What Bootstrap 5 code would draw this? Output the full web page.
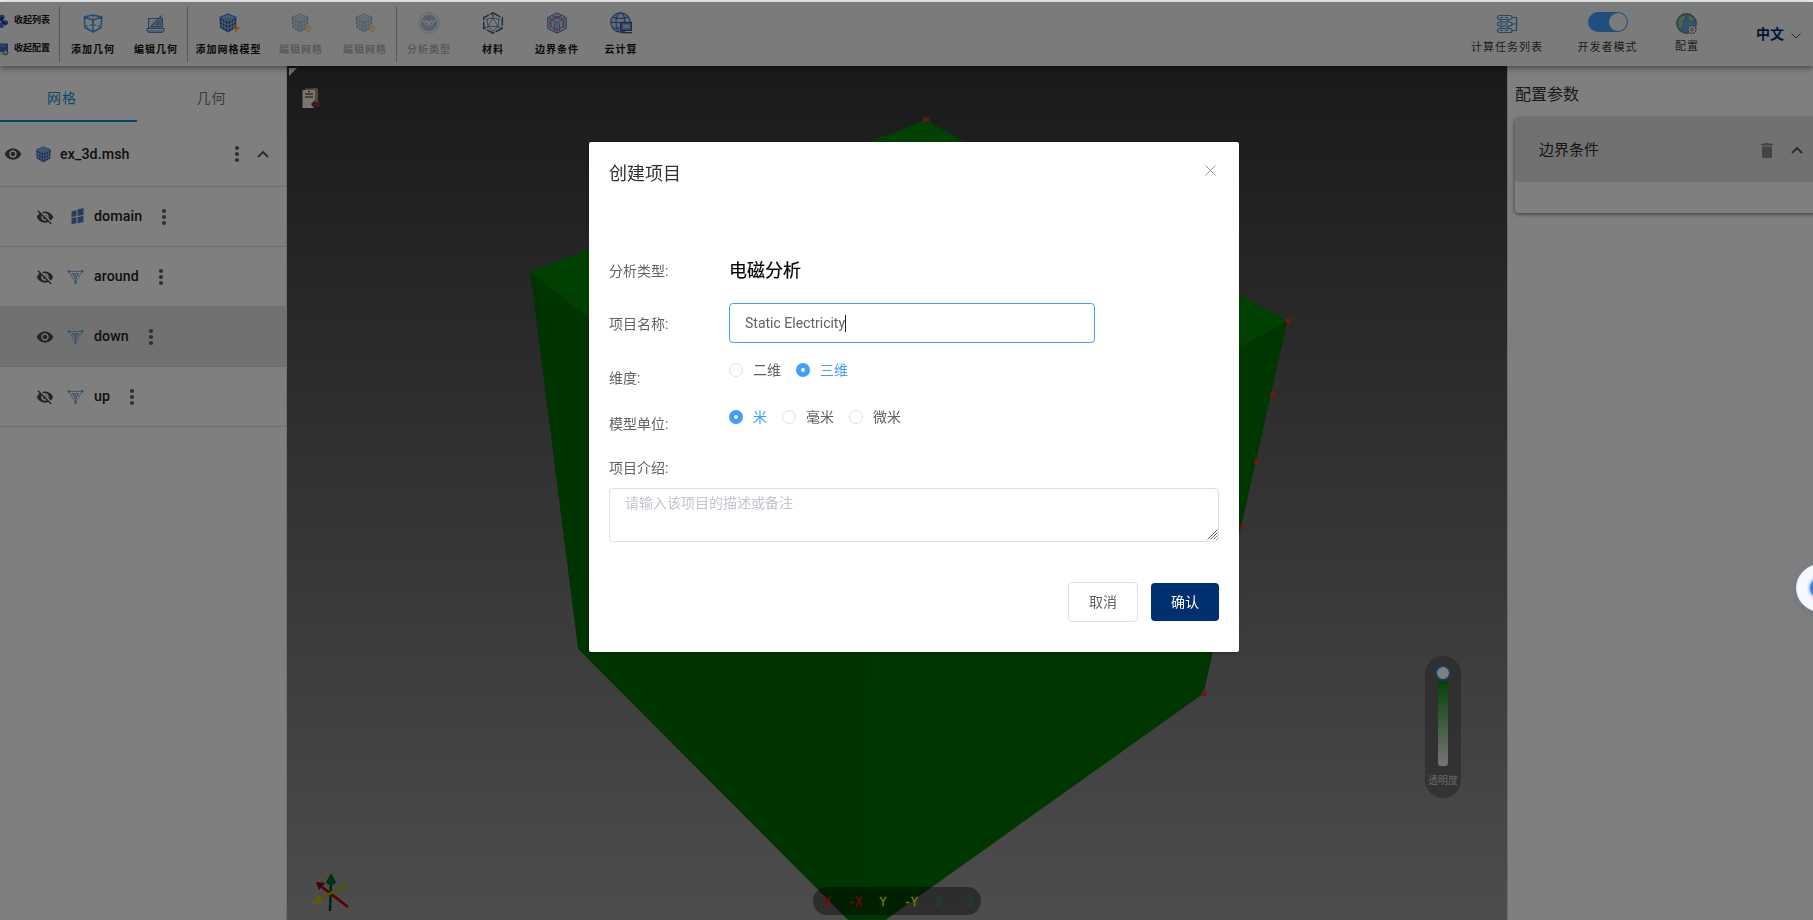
<!DOCTYPE html>
<html lang="zh-CN">
<head>
<meta charset="utf-8">
<meta name="viewport" content="width=device-width, initial-scale=1">
<title>创建项目</title>
<link rel="stylesheet" href="https://cdn.jsdelivr.net/npm/bootstrap@5.3.0/dist/css/bootstrap.min.css">
<style>
  body { font-family: Roboto, "Noto Sans CJK SC", sans-serif; font-size: 14px; line-height: 20px; color: #303133; background: #f1f3f3; overflow: hidden; height: 100vh; }
  svg { display: block; flex: none; }
  .app { height: 918px; margin-top: 2px; background: #fff; }
  .toolbar { height: 64px; background: #f6f6f6; box-shadow: 0 2px 6px rgba(0,0,0,.45); position: relative; z-index: 2; }
  .tool { width: 64px; font-size: 10px; font-weight: 700; letter-spacing: 1px; color: #111; line-height: 16px; white-space: nowrap; }
  .tool svg { margin-bottom: 8px; }
  .tool.wide { width: 81px; }
  .tool.off { color: #b5b5b5; }
  .tool.off svg { opacity: .4; }
  .group { border-left: 1px solid #b0b0b0; height: 56px; margin-top: 4px; }
  .group .tool { padding-top: 6px; }
  .fold { width: 59px; font-size: 9px; font-weight: 700; color: #111; line-height: 12px; padding-top: 12px; }
  .fold > div { height: 28px; align-items: flex-start; }
  .fold svg { margin-left: -6px; margin-right: 5px; }
  .opt { font-size: 11px; letter-spacing: 1px; color: #3a3a3a; line-height: 16px; white-space: nowrap; }
  .opts { margin-right: -1px; }
  .switcher { width: 40px; height: 20px; border-radius: 10px; background: #409eff; padding: 1px; }
  .switcher i { display: block; width: 18px; height: 18px; border-radius: 50%; background: #f6f6f6; margin-left: 20px; }
  .lang { font-weight: 700; color: #003070; }
  .side { width: 287px; border-right: 1px solid #e0e0e0; }
  .tabs { height: 56px; }
  .tabs > div { height: 56px; padding-top: 22px; letter-spacing: 1px; text-align: center; color: #777; }
  .tabs > .on { width: 137px; padding-right: 13px; color: #1593cf; border-bottom: 2px solid #0b8fce; }
  .tree > div { height: 60px; border-bottom: 1px solid #dcdcdc; font-weight: 500; color: #222; }
  .tree .root { height: 65px; padding-left: 4px; }
  .tree .leaf { padding-left: 36px; }
  .tree .leaf .lbl { margin-top: -2px; }
  .tree .leaf svg:last-child { margin-top: 1px; }
  .tree .sel { background: #e3e3e3; }
  .lbl { letter-spacing: .1px; font-size: 14.2px; }
  .view { position: relative; background: linear-gradient(#343434, #9a9a9a); overflow: hidden; }
  .scene { position: absolute; inset: 0; }
  .conf { width: 306px; border-left: 1px solid #d8d8d8; padding-left: 7px; }
  .conf h2 { font-size: 16px; font-weight: 400; line-height: 24px; margin: 17px 0 11px 0; color: #333; }
  .pane { height: 95px; border-radius: 4px; box-shadow: 0 1px 4px rgba(0,0,0,.6); margin-right: -10px; }
  .pane > div { height: 64px; background: #e3e3e3; border-radius: 4px; font-size: 15px; padding: 0 20px 0 24px; color: #2a2a2a; }
  .pane span { margin-top: -1px; }
  .opacity-bar { position: absolute; left: 1138px; top: 590px; width: 36px; height: 142px; border-radius: 18px; background: rgba(60,60,60,.45); padding-top: 9px; font-size: 10px; color: #ccc; line-height: 14px; }
  .knob { width: 16px; height: 16px; border-radius: 50%; border: 2px solid #3478c8; background: #fff; position: relative; z-index: 1; }
  .track { width: 10px; height: 87px; margin-top: -2px; margin-bottom: 8px; border-radius: 0 0 3px 3px; background: linear-gradient(#0a800a, #ececec); }
  .axes { position: absolute; left: 526px; top: 821px; width: 168px; height: 28px; border-radius: 14px; background: rgba(0,0,0,.4); font: 11.5px/30px "DejaVu Sans Mono", monospace; -webkit-text-stroke: .3px; }
  .axes span { width: 28px; text-align: center; }
  .scrim { position: fixed; inset: 2px 0 0 0; background: rgba(0,0,0,.5); z-index: 10; padding: 140px 0 0 589px; }
  .dlg { width: 650px; height: 510px; background: #fff; border-radius: 2px; box-shadow: 0 1px 3px rgba(0,0,0,.3); padding: 20px; color: #606266; }
  .dlg-title { font-size: 18px; line-height: 24px; color: #303133; }
  .frow > label { width: 120px; }
  .kind { font-size: 18px; color: #000; -webkit-text-stroke: .2px #000; }
  .name-box { width: 366px; height: 40px; border: 1px solid #409eff; border-radius: 4px; padding: 0 15px; }
  .name-box::after { content: ""; width: 1px; height: 17px; background: #222; }
  .pick { gap: 10px; margin-right: 15px; }
  .pick i { width: 14px; height: 14px; border-radius: 50%; border: 1px solid #dcdfe6; }
  .pick.on { color: #409eff; }
  .pick.on i { border: 5px solid #409eff; }
  .memo { display: block; width: 610px; height: 54px; border: 1px solid #dcdfe6; border-radius: 4px; padding: 4px 15px; line-height: 21px; resize: none; outline: 0; }
  .memo::placeholder { color: #c0c4cc; opacity: 1; }
  .grip { position: absolute; right: 1px; bottom: 2px; }
  .dlg .btn { font-size: 14px; line-height: 20px; border-radius: 4px; padding: 0 0 1px; }
  .btn-no { width: 70px; height: 40px; border: 1px solid #dcdfe6; color: #606266; }
  .btn-yes, .btn-yes:hover { width: 68px; height: 38px; background: #003070; color: #fff; }
  .assist { position: fixed; right: -31px; top: 564px; width: 48px; height: 48px; border-radius: 50%; background: #f7f9fe; z-index: 11; box-shadow: 0 4px 14px rgba(70,90,140,.25); border: 1px solid #dce5fa; }
  .assist i { width: 20px; height: 20px; border-radius: 50%; background: #3f7df2; box-shadow: 0 0 3px 1px #7fa8f6; }
</style>
</head>
<body>
<svg width="0" height="0" class="position-absolute">
  <defs>
    <symbol id="cube" viewBox="0 0 20 20">
      <path d="M10 .5l8.500 3.500-.6 10.800L10 19.500l-7.900-4.700L1.500 4z" fill="#2559ab"/>
      <path d="M10 .5l8.500 3.500L10 8 1.500 4z" fill="#3f86d6"/>
      <path d="M10 8v11.500M1.500 4L10 8l8.500-4M4.500 2.800L13 6.700v11M7.200 1.700l8.500 3.900v10.600M15.500 2.800L7 6.700v11M12.800 1.700L4.300 5.600v10.600M2 8l8 4 8-4M2 11.500l8 4.200 8-4.200" fill="none" stroke="#c9daf2" stroke-width=".75"/>
    </symbol>
    <symbol id="eye" viewBox="0 0 24 24"><path fill="#484848" d="M12 4.500C7 4.500 2.730 7.610 1 12c1.730 4.390 6 7.500 11 7.500s9.270-3.110 11-7.500c-1.730-4.390-6-7.500-11-7.500zM12 17c-2.760 0-5-2.240-5-5s2.240-5 5-5 5 2.240 5 5-2.240 5-5 5zm0-8c-1.660 0-3 1.340-3 3s1.340 3 3 3 3-1.340 3-3-1.340-3-3-3z"/></symbol>
    <symbol id="eyeoff" viewBox="0 0 24 24"><path fill="#484848" d="M12 7c2.760 0 5 2.240 5 5 0 .65-.13 1.260-.36 1.830l2.920 2.920c1.510-1.260 2.700-2.890 3.430-4.750-1.730-4.390-6-7.500-11-7.500-1.400 0-2.740.25-3.980.7l2.160 2.160C10.740 7.130 11.350 7 12 7zM2 4.270l2.280 2.280.46.46C3.080 8.300 1.780 10.020 1 12c1.730 4.390 6 7.500 11 7.500 1.550 0 3.030-.3 4.380-.84l.42.42L19.730 22 21 20.730 3.270 3 2 4.270zM7.530 9.800l1.550 1.550c-.05.21-.08.43-.08.65 0 1.660 1.340 3 3 3 .22 0 .44-.03.65-.08l1.550 1.550c-.67.33-1.410.53-2.200.53-2.760 0-5-2.240-5-5 0-.79.2-1.530.53-2.200zm4.310-.78l3.150 3.150.02-.16c0-1.660-1.340-3-3-3l-.17.01z"/></symbol>
    <symbol id="dots" viewBox="0 0 6 18"><g fill="#606060"><circle cx="3" cy="3" r="2.100"/><circle cx="3" cy="9" r="2.100"/><circle cx="3" cy="15" r="2.100"/></g></symbol>
    <symbol id="up" viewBox="0 0 12 8"><path d="M1 7l5-5 5 5" fill="none" stroke="#555" stroke-width="1.800"/></symbol>
    <symbol id="tri" viewBox="0 0 16 14"><path d="M1.500 1.500h13L8 12.500zM4.500 3.500L8 5.500l3.500-2M8 5.500v7M5 3.500h6L8 9z" fill="none" stroke="#7c96cc" stroke-width=".8"/><g fill="#4bb4dc"><circle cx="1.400" cy="1.400" r="1.300"/><circle cx="14.600" cy="1.400" r="1.300"/><circle cx="8" cy="12.700" r="1.200"/><circle cx="8" cy="5.500" r=".8"/></g></symbol>
  </defs>
</svg>

<div class="app d-flex flex-column">
  <header class="toolbar d-flex">
    <div class="fold">
      <div class="d-flex"><svg width="15" height="14" viewBox="0 0 15 14"><path d="M6 1h4l1 3-3 3-3-2zM10 6l4 1v3l-3 1-2-2zM5 8l4 1 1 4-3 1-3-2z" fill="#3a68c8"/><path d="M7 6l5 5M8 3l-1 4" stroke="#1a2f86" stroke-width="2"/></svg>收起列表</div>
      <div class="d-flex"><svg width="15" height="14" viewBox="0 0 15 14"><path d="M0 1.500h14V10H0z" fill="#3868bd"/><path d="M2 4h10M3 12h6" stroke="#8aacde"/><circle cx="11.500" cy="10.500" r="2.400" fill="#b4c6e5" stroke="#4a5b80"/></svg>收起配置</div>
    </div>
    <div class="group d-flex" style="padding-left:1px">
      <div class="tool d-flex flex-column align-items-center">
        <svg width="22" height="22" viewBox="0 0 22 22" fill="none" stroke="#4296e0" stroke-width="1.500"><path d="M2.200 5L11 3l8.800 2-.8 10.500-8 4.500-8-4.500zM2.200 5L11 8l8.800-3M11 8v12" stroke-linejoin="round"/><path d="M11 3v9M3 14.500l8-2 8 2" stroke-dasharray="3 1.300" stroke-width="1"/></svg>添加几何</div>
      <div class="tool d-flex flex-column align-items-center" style="margin-left:-1px">
        <svg width="22" height="22" viewBox="0 0 22 22" fill="none" stroke="#5485bd" stroke-width="1.100"><path d="M3.500 6.500h14v9.500h-14z" fill="#dfe8f3"/><path d="M6 14.500L16 4v10.500zM11 12.500l3-3.500v3.500z" fill="#b4d5f2"/><path d="M2 16.500h17v2.500H2zM4 19v1.500h13V19"/></svg>编辑几何</div>
    </div>
    <div class="group d-flex" style="margin-left:-1px">
      <div class="tool wide d-flex flex-column align-items-center"><svg width="22" height="22" viewBox="0 0 22 22"><use href="#cube" y="1" width="20" height="20"/><path d="M18 12.500v7M14.500 16h7" stroke="#eda900" stroke-width="1.700"/></svg>添加网格模型</div>
      <div class="tool off d-flex flex-column align-items-center"><svg width="22" height="22" viewBox="0 0 22 22"><use href="#cube" y="1" width="20" height="20"/><circle cx="18" cy="16.500" r="2.400" fill="none" stroke="#f0c000" stroke-width="2"/></svg>编辑网格</div>
      <div class="tool off d-flex flex-column align-items-center"><svg width="22" height="22" viewBox="0 0 22 22"><use href="#cube" y="1" width="20" height="20"/><circle cx="18" cy="16.500" r="2.400" fill="none" stroke="#f0c000" stroke-width="2"/></svg>编辑网格</div>
    </div>
    <div class="group d-flex" style="margin-left:-1px">
      <div class="tool off d-flex flex-column align-items-center"><svg width="22" height="22" viewBox="0 0 22 22"><circle cx="11" cy="11" r="10.300" fill="#d3dff2" stroke="#8fa4cc"/><circle cx="11" cy="11" r="8.300" fill="#4c72b8"/><path d="M3.500 8.500q3 0 4 3.500 1.500 3 3.500-.5 2 3.500 3.500.5 1-3.500 4-3.500" fill="none" stroke="#e9d488" stroke-width="1.500"/><path d="M8 8.500l3 3 3-3" stroke="#eef3fb" fill="none" stroke-width="1.800"/></svg>分析类型</div>
      <div class="tool d-flex flex-column align-items-center"><svg width="22" height="22" viewBox="0 0 22 22" fill="none" stroke="#2c5cae"><path d="M11 .8l9.300 5v10.400l-9.300 5-9.300-5V5.800z" stroke-width="1.500" stroke-dasharray="8.500 1.500"/><path d="M11 6L6 14.500h10zM2 16l4-1.500L11 19l5-4.500 4 1.500M11 1v5M5 7l6-1 6 1-1 7.500M5 7l1 7.500" stroke-width=".7"/><g fill="#f08a24" stroke="none"><circle cx="11" cy="3.500" r="1.200"/><circle cx="5" cy="7.500" r="1.100"/><circle cx="17" cy="7.500" r="1.100"/><circle cx="5.500" cy="15" r="1.100"/><circle cx="16.500" cy="15" r="1.100"/><circle cx="11" cy="19" r="1.100"/></g></svg>材料</div>
      <div class="tool d-flex flex-column align-items-center"><svg width="22" height="22" viewBox="0 0 22 22" fill="none" stroke="#4a74b5"><path d="M11 .8l9.300 4.700v11L11 21.200l-9.300-4.700v-11z" fill="#bcd3ee"/><path d="M11 11v10M2 5.500l9 5.500 9-5.500M4 8v8M8.500 11v8M13.500 11v8M18 8v8M6.500 3.500l9 4.500M15.500 3.500L6.500 8" stroke-width=".8"/><path d="M11 4l6 3.200v7.600L11 18l-6-3.200V7.200z" stroke="#d85a5a" stroke-width="1"/></svg>边界条件</div>
      <div class="tool d-flex flex-column align-items-center"><svg width="22" height="22" viewBox="0 0 22 22" fill="none" stroke="#4764a0" stroke-width="1.100"><circle cx="10.500" cy="10.500" r="9.800" fill="#bcd8f3"/><ellipse cx="10.500" cy="10.500" rx="4.500" ry="9.800"/><path d="M1 10.500h19M3 5c5 2 10 2 15 0M3 16h8"/><path d="M10.500 10.500h11.200v8H10.500z" fill="#5d87d0" stroke="#4c4680"/><path d="M13 12.500h6.500v4H13z" fill="#a9cbf3" stroke="none"/><path d="M12 20.700h10" stroke="#5c4178" stroke-width="1.300"/></svg>云计算</div>
    </div>
    <div class="opts ms-auto d-flex">
      <div class="opt d-flex flex-column align-items-center" style="width:106px;padding-top:11px">
        <svg width="22" height="22" viewBox="0 0 22 22" fill="none" stroke="#3c8fd0" stroke-width="1.200"><rect x="1.500" y="2.500" width="14.500" height="4" rx="2"/><rect x="1.500" y="9" width="14.500" height="4" rx="2"/><rect x="1.500" y="15.500" width="14.500" height="4" rx="2"/><path d="M4 4.500h3M9 4.500h3M4 11h3M9 11h3M4 17.500h3M9 17.500h3M5 6.500V9M12 6.500V9M5 13v2.500M12 13v2.500M16 4.500h4.500v13H16M16 11h4.500"/></svg><span style="padding-top:5px">计算任务列表</span></div>
      <div class="opt d-flex flex-column align-items-center" style="width:95px;padding-top:10px">
        <div class="switcher"><i></i></div><span style="padding-top:8px">开发者模式</span></div>
      <div class="opt d-flex flex-column align-items-center" style="width:64px;padding-top:11px">
        <svg width="22" height="22" viewBox="0 0 22 22"><circle cx="10.500" cy="10.500" r="9.800" fill="#5fabe0" stroke="#6b7688" stroke-width="1.200"/><path d="M2 7c2-4 5-5 7-5l1 4-3 2 1 3-2 2 1 5c-4-2-6-6-5-11zM12 1.500c4 1 6 3 7 6l-4 2-3-3z" fill="#8fc9a8" stroke="#567a72" stroke-width=".7"/><circle cx="16" cy="16.500" r="4" fill="#f4f4f8" stroke="#77718c" stroke-width="1.300" stroke-dasharray="2.300 .8"/><circle cx="16" cy="16.500" r="1.400" fill="none" stroke="#66607a"/></svg><span style="padding-top:4px">配置</span></div>
      <div class="lang d-flex align-items-center" style="width:95px;height:64px;padding-left:37px">中文<svg class="mt-1" width="10" height="6" viewBox="0 0 10 6" style="margin-left:7px"><path d="M.5.5L5 5 9.500.5" fill="none" stroke="#555"/></svg></div>
    </div>
  </header>

  <main class="d-flex flex-grow-1">
    <aside class="side flex-shrink-0">
      <div class="tabs d-flex"><div class="on">网格</div><div class="flex-grow-1">几何</div></div>
      <div class="tree">
        <div class="root d-flex align-items-center">
          <svg width="18" height="18"><use href="#eye"/></svg>
          <svg width="17" height="17" style="margin-left:13px"><use href="#cube"/></svg>
          <span class="lbl" style="margin-left:8px">ex_3d.msh</span>
          <svg class="ms-auto" width="6" height="18"><use href="#dots"/></svg>
          <svg width="12" height="8" style="margin:0 17px 0 17px"><use href="#up"/></svg>
        </div>
        <div class="leaf d-flex align-items-center">
          <svg width="18" height="18"><use href="#eyeoff"/></svg>
          <svg width="14" height="17" viewBox="0 0 14 17" style="margin-left:17px"><path d="M.5 3.500L5.500 2v6L.5 9zM6.500 1.500l6-1.500v7l-6 1zM.5 10l5-1v6l-5 1.500zM6.500 9l6-1.200V14l-6 1.500z" fill="#5578bd"/></svg>
          <span class="lbl" style="margin-left:9px">domain</span>
          <svg width="6" height="18" style="margin-left:19px"><use href="#dots"/></svg>
        </div>
        <div class="leaf d-flex align-items-center">
          <svg width="18" height="18"><use href="#eyeoff"/></svg>
          <svg width="17" height="14" style="margin-left:13px"><use href="#tri"/></svg>
          <span class="lbl" style="margin-left:10px">around</span>
          <svg width="6" height="18" style="margin-left:19px"><use href="#dots"/></svg>
        </div>
        <div class="leaf sel d-flex align-items-center">
          <svg width="18" height="18"><use href="#eye"/></svg>
          <svg width="17" height="14" style="margin-left:13px"><use href="#tri"/></svg>
          <span class="lbl" style="margin-left:10px">down</span>
          <svg width="6" height="18" style="margin-left:19px"><use href="#dots"/></svg>
        </div>
        <div class="leaf d-flex align-items-center">
          <svg width="18" height="18"><use href="#eyeoff"/></svg>
          <svg width="17" height="14" style="margin-left:13px"><use href="#tri"/></svg>
          <span class="lbl" style="margin-left:10px">up</span>
          <svg width="6" height="18" style="margin-left:19px"><use href="#dots"/></svg>
        </div>
      </div>
    </aside>

    <section class="view flex-grow-1">
      <svg class="scene" width="1220" height="854" viewBox="287 66 1220 854">
        <path d="M578 648.500L877 540v396h-12.800z" fill="#006800"/>
        <path d="M530 271.600L925.500 120 1287.500 321 877 546z" fill="#008000"/>
        <path d="M530 271.600L877 546l-12.800 390L578 648.500z" fill="#006800"/>
        <path d="M876 546l411.500-225-84 372.500L863.200 936z" fill="#006e00"/>
        <path d="M923 117.500h6v4h-6zM1285 319h6v5h-4zM1271 392h4v5h-5zM1255 459h4v5h-5zM1241 524h4v5h-5zM1203 690h3v6h-5z" fill="#e03030"/>
        <path d="M289 68h8l-8 8z" fill="#e4e8e4"/>
        <path d="M305 88.500l12-.5 1 2v12h-3V90h-10z" fill="#b98860"/>
        <path d="M302.500 90H315v10l-4 4 3 4h-11.500z" fill="#f2eddd"/><path d="M305 94h8M305 97h8" stroke="#5f6073" stroke-width="1.300"/><circle cx="309" cy="91.500" r="1" fill="#555"/>
        <path d="M313.500 107.500l6.500-6M315 102l3 5M313 104l7 1.500" stroke="#b03a50" stroke-width="1.200"/>
        <g stroke-width="2.600"><path d="M348 907L322 887" stroke="#a80000"/><path d="M330 911l1-28" stroke="#00501a"/><path d="M348 884l-30 16" stroke="#a8a210"/></g>
        <path d="M316 882l9 1-6 7z" fill="#900000"/><path d="M331 873l5 9-2 2.500h-6l-2-2.500z" fill="#006416"/><path d="M311 904l7-9 5 6-1 2z" fill="#b8b420"/>
      </svg>
      <div class="opacity-bar d-flex flex-column align-items-center"><div class="knob"></div><div class="track"></div>透明度</div>
      <div class="axes d-flex"><span style="color:#f00">X</span><span style="color:#f00">-X</span><span style="color:#ee0">Y</span><span style="color:#ee0">-Y</span><span style="color:#2e8b57">Z</span><span style="color:#2e8b57">-Z</span></div>
    </section>

    <aside class="conf flex-shrink-0">
      <h2>配置参数</h2>
      <div class="pane"><div class="d-flex align-items-center"><span>边界条件</span>
        <svg class="ms-auto" width="12" height="15" viewBox="0 0 12 15"><path d="M0 .8h3.500L4 0h4l.5.800H12v1.700H0zM1 3.500h10V14q0 1-1 1H2q-1 0-1-1z" fill="#888"/></svg>
        <svg width="12" height="8" style="margin-left:18px"><use href="#up"/></svg></div></div>
    </aside>
  </main>
</div>

<div class="scrim">
  <div class="dlg" role="dialog">
    <div class="d-flex justify-content-between">
      <div class="dlg-title">创建项目</div>
      <svg width="11" height="11" viewBox="0 0 11 11" style="margin:3px 3px 0 0"><path d="M.5.5l10 10M10.500.5l-10 10" stroke="#909399"/></svg>
    </div>
    <div class="frow d-flex align-items-center" style="margin-top:75px"><label>分析类型:</label><div class="kind">电磁分析</div></div>
    <div class="frow d-flex align-items-center" style="margin-top:22px"><label style="padding-top:1px">项目名称:</label><div class="name-box d-flex align-items-center">Static Electricity</div></div>
    <div class="frow d-flex" style="margin-top:17px">
      <label style="padding-top:8px">维度:</label>
      <div class="d-flex align-items-start"><div class="pick d-flex align-items-center"><i></i>二维</div><div class="pick on d-flex align-items-center"><i></i>三维</div></div>
    </div>
    <div class="frow d-flex" style="margin-top:19px">
      <label style="padding-top:7px">模型单位:</label>
      <div class="d-flex align-items-start"><div class="pick on d-flex align-items-center"><i></i>米</div><div class="pick d-flex align-items-center"><i></i>毫米</div><div class="pick d-flex align-items-center"><i></i>微米</div></div>
    </div>
    <div style="margin:24px 0 10px">项目介绍:</div>
    <div class="position-relative"><textarea class="memo" placeholder="请输入该项目的描述或备注"></textarea>
      <svg class="grip" width="11" height="11" viewBox="0 0 11 11"><path d="M.5 10.500l10-10M3.500 10.500l7-7M6.500 10.500l4-4M9.500 10.500l1-1" stroke="#555" stroke-width=".9"/></svg></div>
    <div class="d-flex justify-content-end align-items-center" style="margin-top:40px;gap:13px"><button class="btn btn-no">取消</button><button class="btn btn-yes">确认</button></div>
  </div>
</div>
<div class="assist d-flex align-items-center justify-content-center"><i></i></div>
<script src="https://cdn.jsdelivr.net/npm/bootstrap@5.3.0/dist/js/bootstrap.bundle.min.js"></script>
</body>
</html>
